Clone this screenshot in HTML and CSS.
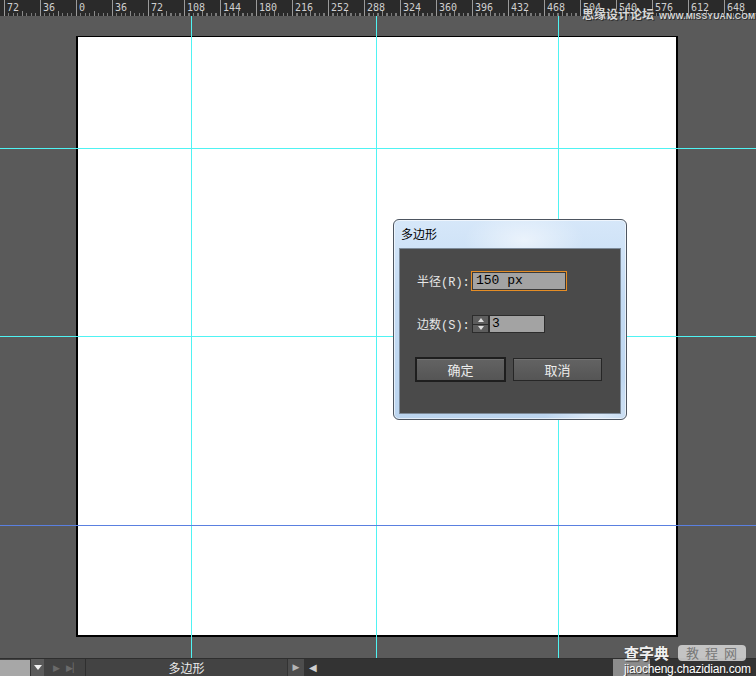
FILE: index.html
```html
<!DOCTYPE html>
<html lang="zh">
<head>
<meta charset="utf-8">
<title>多边形</title>
<link rel="stylesheet" href="styles.css">
</head>
<body>
<div class="app">
  <div class="ruler">
    <span class="tick-label">72</span><span class="tick-label">36</span><span class="tick-label">0</span><span class="tick-label">36</span><span class="tick-label">72</span><span class="tick-label">108</span><span class="tick-label">144</span><span class="tick-label">180</span><span class="tick-label">216</span><span class="tick-label">252</span><span class="tick-label">288</span><span class="tick-label">324</span><span class="tick-label">360</span><span class="tick-label">396</span><span class="tick-label">432</span><span class="tick-label">468</span><span class="tick-label">504</span><span class="tick-label">540</span><span class="tick-label">576</span><span class="tick-label">612</span><span class="tick-label">648</span>
  </div>

  <div class="workspace">
    <div class="artboard"></div>

    <div class="guide guide-v cyan" style="left:191px"></div>
    <div class="guide guide-v cyan" style="left:376px"></div>
    <div class="guide guide-v cyan" style="left:558px"></div>
    <div class="guide guide-h cyan" style="top:132px"></div>
    <div class="guide guide-h cyan" style="top:320px"></div>
    <div class="guide guide-h blue" style="top:509px"></div>

    <div class="dialog">
      <div class="dialog-title">多边形</div>
      <div class="dialog-panel">
        <div class="field-row row-radius">
          <span class="field-label">半径(R):</span>
          <div class="text-input focused">150 px</div>
        </div>
        <div class="field-row row-sides">
          <span class="field-label">边数(S):</span>
          <div class="spinner">
            <span class="spin-btn"><span class="tri-up"></span></span>
            <span class="spin-btn"><span class="tri-down"></span></span>
          </div>
          <div class="text-input small">3</div>
        </div>
        <div class="button-row">
          <button class="btn btn-default">确定</button>
          <button class="btn">取消</button>
        </div>
      </div>
    </div>
  </div>

  <div class="statusbar">
    <div class="zoom-field"></div>
    <div class="drop-btn"><span class="tri-down white"></span></div>
    <div class="nav">
      <span class="nav-ico">&#9654;</span>
      <span class="nav-ico">&#9654;&#x258F;</span>
    </div>
    <div class="doc-name">多边形</div>
    <div class="arrow-btn">&#9654;</div>
    <div class="scroll-track">
      <span class="scroll-left">&#9664;</span>
      <span class="scroll-thumb"></span>
    </div>
  </div>

  <div class="wm-top">
    <span class="wm-top-cn">思缘设计论坛</span>
    <span class="wm-top-en">WWW.MISSYUAN.COM</span>
  </div>
  <div class="wm-bottom">
    <div class="wm-line1"><span class="wm-czd">查字典</span><span class="wm-box">教程网</span></div>
    <div class="wm-url">jiaocheng.chazidian.com</div>
  </div>
</div>
</body>
</html>
```

FILE: styles.css
```css
* { box-sizing: border-box; }
html, body { margin: 0; padding: 0; }
body {
  width: 756px;
  height: 676px;
  overflow: hidden;
  background: #5a5a5a;
  font-family: "Liberation Mono", "Noto Sans CJK SC", monospace;
}
.app {
  position: relative;
  width: 756px;
  height: 676px;
  display: flex;
  flex-direction: column;
}

/* ruler */
.ruler {
  height: 16px;
  flex: none;
  display: flex;
  padding-left: 4px;
  background-color: #2a2a2a;
  background-image:
    repeating-linear-gradient(90deg, #9a9a9a 0 1px, transparent 1px 36px),
    repeating-linear-gradient(90deg, #8a8a8a 0 1px, transparent 1px 18px),
    repeating-linear-gradient(90deg, #7a7a7a 0 1px, transparent 1px 4.5px);
  background-size: 100% 16px, 100% 5px, 100% 3px;
  background-position: 4px 0, 4px 100%, 4px 100%;
  background-repeat: no-repeat;
  overflow: hidden;
}
.tick-label {
  flex: none;
  width: 36px;
  padding-left: 3px;
  font-family: "DejaVu Sans Mono", monospace;
  font-size: 10px;
  line-height: 15px;
  color: #cfcfcf;
}

/* workspace */
.workspace {
  position: relative;
  height: 642px;
  flex: none;
  padding: 20px 0 0 76px;
  background: #5a5a5a;
}
.artboard {
  width: 602px;
  height: 601px;
  background: #fff;
  border: 2px solid #000;
  border-top-width: 1px;
}
.guide { position: absolute; }
.guide-v { top: 0; bottom: 0; width: 1px; }
.guide-h { left: 0; right: 0; height: 1px; }
.cyan { background: #4ff3f3; }
.blue { background: #5a80e0; }

/* dialog */
.dialog {
  position: absolute;
  left: 393px;
  top: 203px;
  width: 234px;
  height: 201px;
  border: 1px solid #4d5560;
  border-radius: 6px;
  background:
    radial-gradient(ellipse 60px 30px at 130px 20px, rgba(255,255,255,0.55), transparent),
    radial-gradient(ellipse 50px 40px at 200px 190px, rgba(255,255,255,0.5), transparent),
    linear-gradient(180deg, #d6e7f9 0%, #c4dbf3 40%, #bcd5ef 100%);
  display: flex;
  flex-direction: column;
  box-shadow: inset 0 0 0 1px rgba(255,255,255,0.6);
}
.dialog-title {
  height: 28px;
  padding: 6px 0 0 7px;
  font-family: "Noto Sans CJK SC", sans-serif;
  font-size: 12px;
  line-height: 16px;
  color: #000;
}
.dialog-panel {
  margin: 0 5px 5px 5px;
  flex: 1;
  background: #4a4a4a;
  border: 1px solid #7d8a98;
  padding: 22px 0 0 15px;
  display: flex;
  flex-direction: column;
}
.field-row {
  display: flex;
  align-items: center;
}
.row-radius { height: 20px; }
.row-sides { height: 18px; margin-top: 24px; }
.field-label {
  width: 54px;
  margin-left: 2px;
  font-family: "Liberation Mono", "Noto Sans CJK SC", monospace;
  font-size: 12px;
  color: #e6e6e6;
  white-space: nowrap;
}
.text-input {
  height: 20px;
  width: 96px;
  background: #a3a3a3;
  border: 1px solid #2c2c2c;
  padding-left: 4px;
  font-family: "Liberation Mono", monospace;
  font-size: 13px;
  line-height: 18px;
  color: #000;
}
.text-input.focused {
  border-color: #e58d25;
  box-shadow: inset 0 0 0 1px #3a3a3a;
}
.text-input.small {
  width: 56px;
  height: 18px;
  line-height: 16px;
  padding-left: 2px;
}
.spinner {
  width: 17px;
  height: 18px;
  margin-left: 1px;
  display: flex;
  flex-direction: column;
  border: 1px solid #2c2c2c;
}
.spin-btn {
  flex: 1;
  background: #5d5d5d;
  display: flex;
  align-items: center;
  justify-content: center;
}
.spin-btn + .spin-btn { border-top: 1px solid #2c2c2c; }
.tri-up, .tri-down {
  width: 0; height: 0;
  border-left: 3px solid transparent;
  border-right: 3px solid transparent;
}
.tri-up { border-bottom: 4px solid #e0e0e0; }
.tri-down { border-top: 4px solid #e0e0e0; }
.tri-down.white {
  border-left-width: 4px;
  border-right-width: 4px;
  border-top: 5px solid #f2f2f2;
}
.button-row {
  display: flex;
  align-items: center;
  margin-top: 24px;
  gap: 7px;
}
.btn {
  width: 89px;
  height: 23px;
  padding: 0;
  background: linear-gradient(180deg, #636363, #555555);
  border: 1px solid #262626;
  box-shadow: inset 0 1px 0 #707070;
  font-family: "Noto Sans CJK SC", sans-serif;
  font-size: 13px;
  color: #ececec;
}
.btn-default {
  width: 91px;
  height: 25px;
  border: 2px solid #1e1e1e;
}

/* status bar */
.statusbar {
  height: 18px;
  flex: none;
  display: flex;
  align-items: stretch;
  background: #434343;
  border-top: 1px solid #2e2e2e;
}
.zoom-field {
  width: 30px;
  margin-top: 1px;
  background: #a7a7a7;
}
.drop-btn {
  width: 14px;
  background: #5b5b5b;
  border-left: 1px solid #333;
  display: flex;
  align-items: center;
  justify-content: center;
}
.nav {
  width: 42px;
  display: flex;
  align-items: center;
  gap: 6px;
  padding-left: 9px;
  border-right: 1px solid #2f2f2f;
  font-size: 9px;
  color: #6a6a6a;
  font-family: "DejaVu Sans", sans-serif;
}
.doc-name {
  width: 201px;
  text-align: center;
  font-family: "Noto Sans CJK SC", sans-serif;
  font-size: 12px;
  line-height: 17px;
  color: #ececec;
}
.arrow-btn {
  width: 18px;
  background: #4d4d4d;
  border-left: 1px solid #333;
  border-right: 1px solid #333;
  font-family: "DejaVu Sans", sans-serif;
  font-size: 9px;
  line-height: 17px;
  text-align: center;
  color: #b5b5b5;
}
.scroll-track {
  flex: 1;
  background: #333;
  display: flex;
  align-items: stretch;
}
.scroll-left {
  width: 308px;
  padding-left: 4px;
  font-family: "DejaVu Sans", sans-serif;
  font-size: 10px;
  line-height: 17px;
  color: #cfcfcf;
}
.scroll-thumb {
  width: 37px;
  background: #8c8c8c;
}

/* watermarks */
.wm-top {
  position: absolute;
  left: 582px;
  top: 6px;
  display: flex;
  align-items: center;
  gap: 5px;
  white-space: nowrap;
  color: #d8d8d8;
  text-shadow: 0 0 1px #222, 1px 1px 0 #333;
}
.wm-top-cn {
  font-family: "Noto Sans CJK SC", sans-serif;
  font-size: 12px;
  font-weight: 700;
  line-height: 16px;
}
.wm-top-en {
  font-family: "Liberation Sans", sans-serif;
  font-size: 8.5px;
  font-weight: 700;
  letter-spacing: 0.2px;
  padding-top: 4px;
}
.wm-bottom {
  position: absolute;
  left: 624px;
  top: 643px;
  width: 128px;
  color: #fff;
}
.wm-line1 {
  display: flex;
  align-items: center;
  gap: 9px;
  height: 19px;
}
.wm-czd {
  font-family: "Noto Sans CJK SC", sans-serif;
  font-size: 15px;
  font-weight: 700;
  line-height: 19px;
  color: #f0f0f0;
  text-shadow: 1px 1px 1px #333;
}
.wm-box {
  width: 68px;
  height: 16px;
  border-radius: 4px;
  background: rgba(215,215,215,0.85);
  color: #777;
  font-family: "Noto Sans CJK SC", sans-serif;
  font-size: 13px;
  line-height: 16px;
  letter-spacing: 6px;
  padding-left: 8px;
  white-space: nowrap;
}
.wm-url {
  margin-top: 1px;
  font-family: "Liberation Sans", sans-serif;
  font-size: 12px;
  line-height: 13px;
  letter-spacing: -0.2px;
  white-space: nowrap;
  color: #fff;
  text-shadow: 1px 1px 1px #222;
}
```
